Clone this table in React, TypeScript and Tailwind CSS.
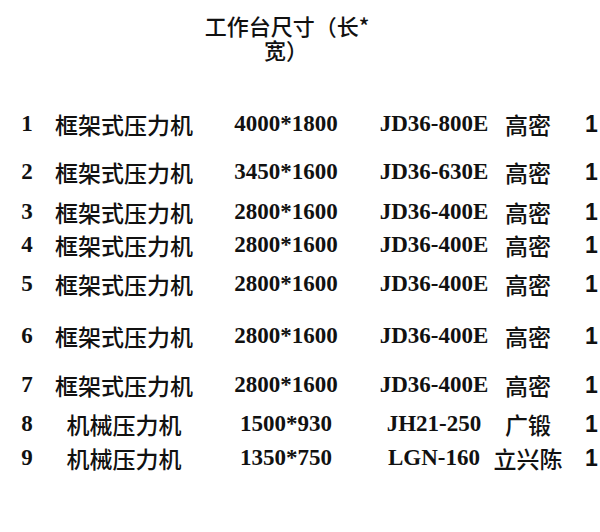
import React from "react";

const rows = [
  { n: "1", name: "框架式压力机", size: "4000*1800", model: "JD36-800E", maker: "高密", mt: "mt-[50px]" },
  { n: "2", name: "框架式压力机", size: "3450*1600", model: "JD36-630E", maker: "高密", mt: "mt-[24px]" },
  { n: "3", name: "框架式压力机", size: "2800*1600", model: "JD36-400E", maker: "高密", mt: "mt-[16px]" },
  { n: "4", name: "框架式压力机", size: "2800*1600", model: "JD36-400E", maker: "高密", mt: "mt-[9px]" },
  { n: "5", name: "框架式压力机", size: "2800*1600", model: "JD36-400E", maker: "高密", mt: "mt-[15px]" },
  { n: "6", name: "框架式压力机", size: "2800*1600", model: "JD36-400E", maker: "高密", mt: "mt-[28px]" },
  { n: "7", name: "框架式压力机", size: "2800*1600", model: "JD36-400E", maker: "高密", mt: "mt-[25px]" },
  { n: "8", name: "机械压力机", size: "1500*930", model: "JH21-250", maker: "广锻", mt: "mt-[15px]" },
  { n: "9", name: "机械压力机", size: "1350*750", model: "LGN-160", maker: "立兴陈", mt: "mt-[10px]" },
];

const serif = "font-['Liberation_Serif','Noto_Sans_CJK_SC',serif] font-bold";
const cjk = "font-['Noto_Sans_CJK_SC',sans-serif] font-medium";

export default function App() {
  return (
    <div className="w-[600px] h-[532px] bg-white text-[#111] overflow-hidden">
      <div className="grid grid-cols-[54px_140px_184px_112px_76px_1fr] pt-[13px]">
        <div />
        <div />
        <div className={`${cjk} text-[22px] text-center`}>
          <div className="pl-[2px] h-[24px] leading-[24px]">工作台尺寸（长*</div>
          <div className="h-[25px] leading-[25px]">宽）</div>
        </div>
      </div>
      <div className="flex flex-col">
        {rows.map((r) => (
          <div
            key={r.n}
            className={`grid grid-cols-[54px_140px_184px_112px_76px_1fr] h-[24px] leading-[24px] text-[23px] ${r.mt}`}
          >
            <div className={`${serif} text-center`}>{r.n}</div>
            <div className={`${cjk} text-center whitespace-nowrap`}>{r.name}</div>
            <div className={`${serif} text-center whitespace-nowrap`}>{r.size}</div>
            <div className={`${serif} text-center whitespace-nowrap`}>{r.model}</div>
            <div className={`${cjk} text-center whitespace-nowrap`}>{r.maker}</div>
            <div className="font-['Liberation_Sans',sans-serif] font-bold pl-[19px]">1</div>
          </div>
        ))}
      </div>
    </div>
  );
}
